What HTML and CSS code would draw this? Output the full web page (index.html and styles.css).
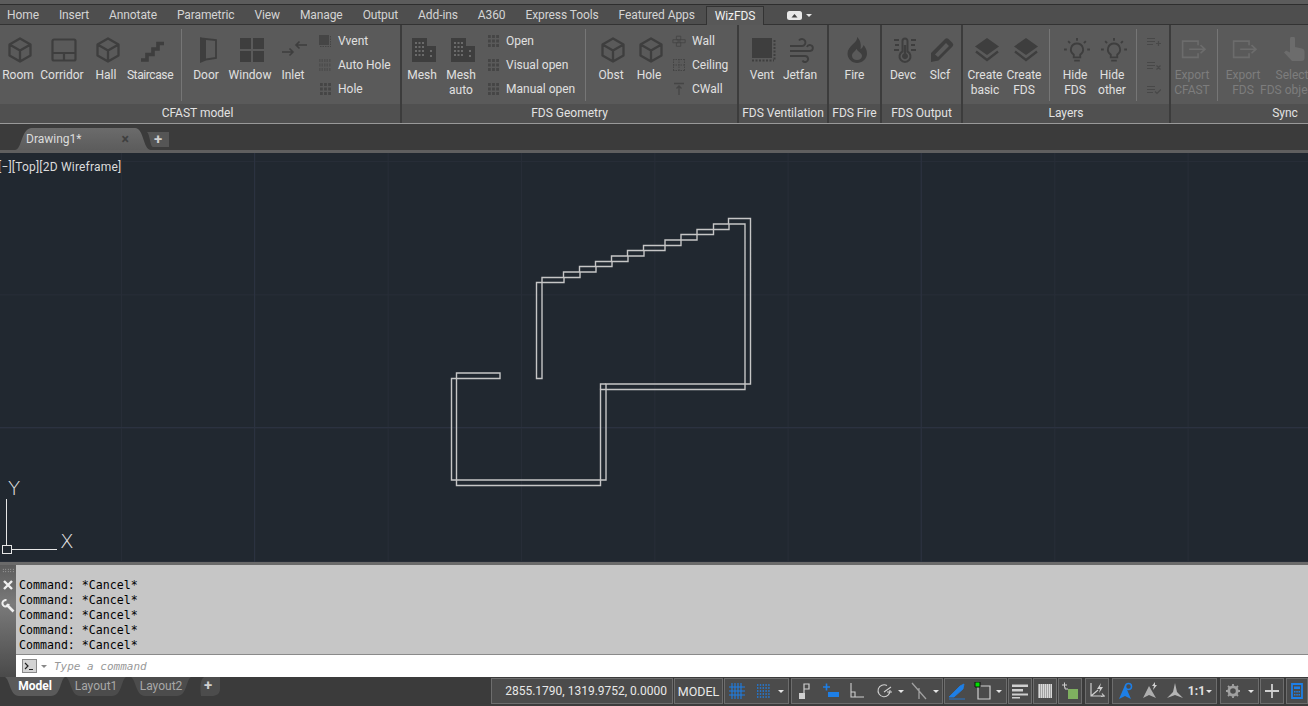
FILE: index.html
```html
<!DOCTYPE html>
<html lang="en">
<head>
<meta charset="UTF-8">
<title>Drawing1 - WizFDS</title>
<link rel="stylesheet" href="styles.css">
</head>
<body>
<svg class="defs" width="0" height="0">
  <!-- ribbon icons, 26 box -->
  <symbol id="cube" viewBox="0 0 26 26"><path d="M13 1.5 23.5 7.5v11L13 24.5 2.5 18.5v-11zM2.5 7.5 13 13.5 23.5 7.5M13 13.5v11" fill="none" stroke="currentColor" stroke-width="2.3" stroke-linejoin="round"/></symbol>
  <symbol id="corridor" viewBox="0 0 26 26"><path d="M3 2.5h20a1.5 1.5 0 0 1 1.5 1.5v18a1.5 1.5 0 0 1-1.5 1.5H3A1.5 1.5 0 0 1 1.500 22V4A1.500 1.500 0 0 1 3 2.500zM1.500 16h23M13 16v7.500" fill="none" stroke="currentColor" stroke-width="2.200"/></symbol>
  <symbol id="stair" viewBox="0 0 26 26"><path d="M2 23h6v-5.500h6V12h5V6.500h6" fill="none" stroke="currentColor" stroke-width="3.600"/></symbol>
  <symbol id="door" viewBox="0 0 26 26"><path d="M5 0v26l6-2.500V3z" fill="currentColor"/><path d="M6 1.500 21 3v18l-10 1.500" fill="none" stroke="currentColor" stroke-width="1.800"/></symbol>
  <symbol id="window" viewBox="0 0 26 26"><path d="M1 1h11v11H1zM14 1h11v11H14zM1 14h11v11H1zM14 14h11v11H14z" fill="currentColor"/></symbol>
  <symbol id="inlet" viewBox="0 0 26 26"><path d="M0 15h11M7.500 11.500 11 15l-3.500 3.500M25 8H14M17.500 4.500 14 8l3.500 3.500" fill="none" stroke="currentColor" stroke-width="1.600"/></symbol>
  <symbol id="mesh" viewBox="0 0 26 26"><path d="M1 25V1h15v8h9v16z" fill="currentColor"/><path d="M4 6h9M4 10h9M4 14h9M4 18h9M19 14h3M19 19h3" fill="none" stroke="#6a6a6a" stroke-width="2" stroke-dasharray="2 1.500"/></symbol>
  <symbol id="vent" viewBox="0 0 26 26"><path d="M1 1h20v20H1z" fill="currentColor"/><path d="M23.500 3v21M1 23.500h22" fill="none" stroke="currentColor" stroke-width="2" stroke-dasharray="2 1.500"/></symbol>
  <symbol id="wind" viewBox="0 0 26 26"><path d="M1 9h12a3.500 3.500 0 1 0-3-5.500M1 14h20a3 3 0 1 0-3-4M1 19h15a3 3 0 1 1-2.500 4.500" fill="none" stroke="currentColor" stroke-width="1.900"/></symbol>
  <symbol id="fire" viewBox="0 0 26 26"><path fill-rule="evenodd" d="M13 0c1.500 5-9.500 9-9.500 16.500C3.500 22 8 26 13 26s10-4 10-9.500c0-4-2-6.500-3.500-8.500-.5 2-1.500 3.500-3 4C17.500 7 16 2.500 13 0zM13 23c-3 0-5-1.800-5-4.200 0-3 3-4 4.500-7 1 3 5.500 4 5.500 7.200 0 2.300-2 4-5 4z" fill="currentColor"/></symbol>
  <symbol id="thermo" viewBox="0 0 26 26"><path d="M10.500 14.500V4a2.500 2.500 0 0 1 5 0v10.500a5.500 5.500 0 1 1-5 0z" fill="none" stroke="currentColor" stroke-width="2"/><path d="M11.800 8h2.400v8.500a3 3 0 1 1-2.400 0z" fill="currentColor"/><path d="M2 3h5M3 8h4M2 13h5M19 3h5M19 8h4M19 13h5" stroke="currentColor" stroke-width="2"/></symbol>
  <symbol id="pencil" viewBox="0 0 26 26"><path d="M2 25v-9L16 2a2.500 2.500 0 0 1 3.500 0l4 4a2.500 2.500 0 0 1 0 3.500L9.500 23.500zM6 17.500l3 2.500L20 9l-3-3z" fill="currentColor" fill-rule="evenodd"/></symbol>
  <symbol id="layers" viewBox="0 0 26 26"><path d="M13 1 25 9.500 13 18 1 9.500z" fill="currentColor"/><path d="M2 14.500 13 23l11-8.500" fill="none" stroke="currentColor" stroke-width="2.300"/></symbol>
  <symbol id="bulb" viewBox="0 0 28 26"><path d="M14 6a6.500 6.500 0 0 0-3.500 12v3h7v-3A6.500 6.500 0 0 0 14 6zM11 24.500h6M14 0v3M4.500 3.500l2 2M23.500 3.500l-2 2M0 12.500h3M25 12.500h3" fill="none" stroke="currentColor" stroke-width="2"/></symbol>
  <symbol id="export" viewBox="0 0 32 26"><path d="M21 7V2H2v20h19v-5M10 12h19M24 7l5.500 5-5.500 5" fill="none" stroke="currentColor" stroke-width="2"/></symbol>
  <symbol id="hand" viewBox="0 0 26 26"><path d="M9 2a2.500 2.500 0 0 1 5 0v8l7 1.500a3 3 0 0 1 2.500 3V21a3 3 0 0 1-3 3H11L3 15.500l2-2 4 2z" fill="currentColor"/></symbol>
  <!-- small ribbon icons, 14 box -->
  <symbol id="s-vvent" viewBox="0 0 14 14"><path d="M1 1h10v10H1z" fill="currentColor"/><path d="M12.500 2v10M2 12.500h11" stroke="currentColor" stroke-dasharray="1.500 1"/></symbol>
  <symbol id="s-auto" viewBox="0 0 14 14"><path d="M1 2.500h12M1 7h12M1 11.500h12" stroke="currentColor" stroke-width="3" stroke-dasharray="1.500 1" opacity=".55"/></symbol>
  <symbol id="s-grid" viewBox="0 0 14 14"><path d="M2 2.500h11M2 7h11M2 11.500h11" stroke="currentColor" stroke-width="2.800" stroke-dasharray="2.800 1.300"/></symbol>
  <symbol id="s-wall" viewBox="0 0 16 14"><path d="M5 1.500h5v4H5zM1 5.500h6v3.500H1zM9 5.500h6v3.500H9zM5 9h5v4H5z" fill="none" stroke="currentColor"/></symbol>
  <symbol id="s-ceil" viewBox="0 0 14 14"><path d="M1 1.500h12M1 12.500h12M1.500 1v12M12.500 1v12M7 1v12M1 7h12" fill="none" stroke="currentColor" stroke-dasharray="1.500 1"/></symbol>
  <symbol id="s-cwall" viewBox="0 0 14 14"><path d="M2 1.500h10M7 13V4M4.500 6.500 7 4l2.500 2.500" fill="none" stroke="currentColor" stroke-width="1.300"/></symbol>
  <symbol id="m-add" viewBox="0 0 14 10"><path d="M0 1.500h8M0 4.500h8M0 7.500h6M9 6.500h5M11.500 4v5" fill="none" stroke="currentColor" stroke-width="1.200"/></symbol>
  <symbol id="m-del" viewBox="0 0 14 10"><path d="M0 1.500h8M0 4.500h8M0 7.500h6M9.500 4.500l4 4M13.500 4.500l-4 4" fill="none" stroke="currentColor" stroke-width="1.200"/></symbol>
  <symbol id="m-ok" viewBox="0 0 14 10"><path d="M0 1.500h8M0 4.500h8M0 7.500h6M8 6.500l2 2 4-4" fill="none" stroke="currentColor" stroke-width="1.200"/></symbol>
</svg>

<div class="app">
  <div class="titlebar"></div>

  <div class="tabs">
    <span class="tab">Home</span>
    <span class="tab">Insert</span>
    <span class="tab">Annotate</span>
    <span class="tab">Parametric</span>
    <span class="tab">View</span>
    <span class="tab">Manage</span>
    <span class="tab">Output</span>
    <span class="tab">Add-ins</span>
    <span class="tab">A360</span>
    <span class="tab">Express Tools</span>
    <span class="tab">Featured Apps</span>
    <span class="tab tab-active">WizFDS</span>
    <span class="tab-extra"><svg width="15" height="9" viewBox="0 0 15 9"><rect width="15" height="9" rx="2.500" fill="#e8e8e8"/><path d="M4.500 6.500 7.500 3l3 3.500z" fill="#444"/></svg><i class="caret"></i></span>
  </div>

  <div class="ribbon">
    <section class="panel p-cfast">
      <div class="panel-body">
        <div class="btn"><svg><use href="#cube"/></svg><span>Room</span></div>
        <div class="btn"><svg><use href="#corridor"/></svg><span>Corridor</span></div>
        <div class="btn"><svg><use href="#cube"/></svg><span>Hall</span></div>
        <div class="btn"><svg><use href="#stair"/></svg><span class="tight">Staircase</span></div>
        <div class="sep"></div>
        <div class="btn"><svg><use href="#door"/></svg><span>Door</span></div>
        <div class="btn"><svg><use href="#window"/></svg><span>Window</span></div>
        <div class="btn"><svg><use href="#inlet"/></svg><span>Inlet</span></div>
        <div class="stack">
          <div class="item"><svg><use href="#s-vvent"/></svg>Vvent</div>
          <div class="item"><svg><use href="#s-auto"/></svg>Auto Hole</div>
          <div class="item"><svg><use href="#s-grid"/></svg>Hole</div>
        </div>
      </div>
      <div class="panel-name">CFAST model</div>
    </section>

    <section class="panel p-geom">
      <div class="panel-body">
        <div class="btn"><svg><use href="#mesh"/></svg><span>Mesh</span></div>
        <div class="btn"><svg><use href="#mesh"/></svg><span>Mesh<br>auto</span></div>
        <div class="stack">
          <div class="item"><svg><use href="#s-grid"/></svg>Open</div>
          <div class="item"><svg><use href="#s-grid"/></svg>Visual open</div>
          <div class="item"><svg><use href="#s-grid"/></svg>Manual open</div>
        </div>
        <div class="sep"></div>
        <div class="btn"><svg><use href="#cube"/></svg><span>Obst</span></div>
        <div class="btn"><svg><use href="#cube"/></svg><span>Hole</span></div>
        <div class="stack">
          <div class="item"><svg><use href="#s-wall"/></svg>Wall</div>
          <div class="item"><svg><use href="#s-ceil"/></svg>Ceiling</div>
          <div class="item"><svg><use href="#s-cwall"/></svg>CWall</div>
        </div>
      </div>
      <div class="panel-name">FDS Geometry</div>
    </section>

    <section class="panel p-vent">
      <div class="panel-body">
        <div class="btn"><svg><use href="#vent"/></svg><span>Vent</span></div>
        <div class="btn"><svg><use href="#wind"/></svg><span>Jetfan</span></div>
      </div>
      <div class="panel-name">FDS Ventilation</div>
    </section>

    <section class="panel p-fire">
      <div class="panel-body">
        <div class="btn"><svg><use href="#fire"/></svg><span>Fire</span></div>
      </div>
      <div class="panel-name">FDS Fire</div>
    </section>

    <section class="panel p-out">
      <div class="panel-body">
        <div class="btn"><svg><use href="#thermo"/></svg><span>Devc</span></div>
        <div class="btn"><svg><use href="#pencil"/></svg><span>Slcf</span></div>
      </div>
      <div class="panel-name">FDS Output</div>
    </section>

    <section class="panel p-layers">
      <div class="panel-body">
        <div class="btn"><svg><use href="#layers"/></svg><span>Create<br>basic</span></div>
        <div class="btn"><svg><use href="#layers"/></svg><span>Create<br>FDS</span></div>
        <div class="sep"></div>
        <div class="btn"><svg><use href="#bulb"/></svg><span>Hide<br>FDS</span></div>
        <div class="btn"><svg><use href="#bulb"/></svg><span>Hide<br>other</span></div>
        <div class="sep"></div>
        <div class="minis">
          <svg><use href="#m-add"/></svg>
          <svg><use href="#m-del"/></svg>
          <svg><use href="#m-ok"/></svg>
        </div>
      </div>
      <div class="panel-name">Layers</div>
    </section>

    <section class="panel p-sync">
      <div class="panel-body">
        <div class="btn off"><svg><use href="#export"/></svg><span>Export<br>CFAST</span></div>
        <div class="sep"></div>
        <div class="btn off"><svg><use href="#export"/></svg><span>Export<br>FDS</span></div>
        <div class="btn off"><svg><use href="#hand"/></svg><span>Select<br>FDS objects</span></div>
      </div>
      <div class="panel-name">Sync</div>
    </section>
  </div>

  <div class="docbar">
    <div class="doctab"><span>Drawing1*</span><b>×</b></div>
    <div class="docplus">+</div>
  </div>

  <main class="canvas">
    <div class="vp-label">[−][Top][2D Wireframe]</div>
    <svg class="drawing" viewBox="0 153 1308 409">
      <path class="wall" d="M750.5 218.500H728.500V224H713.500V229.500H697V234.500H681V240H665V245.500H643.500V250.500H627.500V256H611.500V261.500H595.500V266.500H579.500V272H563.500V277.500H542V378.500H536.500V282.500H564V277.500H580V272H596V266.500H612V261.500H628V256H644V250.500H665V245.500H681V240H697V234.500H713.500V229.500H729V224H745V389.500H600.500V485.500H456.500V373H500V378.500H451.500V480H606V384H750.500Z"/>
      <path class="wall" d="M600.500 389.500V384H606"/>
      <g class="ucs">
        <path d="M6.500 499V545M12 549.500H57"/>
        <rect x="2.500" y="545.500" width="9" height="8"/>
        <text x="8" y="495">Y</text>
        <text x="60" y="548">X</text>
      </g>
    </svg>
  </main>

  <div class="cmd">
    <div class="cmd-side">
      <i class="grip"></i>
      <svg width="12" height="12" viewBox="0 0 12 12"><path d="M2 2l8 8M10 2l-8 8" stroke="#f0f0f0" stroke-width="2.400"/></svg>
      <svg class="wrench" width="14" height="14" viewBox="0 0 14 14"><path d="M5.500 5.500l7 7" stroke="#f0f0f0" stroke-width="2.600"/><path d="M5.500 1.200A3.200 3.200 0 1 0 7.800 4.800" fill="none" stroke="#f0f0f0" stroke-width="2"/></svg>
    </div>
    <div class="cmd-main">
      <div class="history">
        <div>Command: *Cancel*</div>
        <div>Command: *Cancel*</div>
        <div>Command: *Cancel*</div>
        <div>Command: *Cancel*</div>
        <div>Command: *Cancel*</div>
      </div>
      <div class="cmd-input">
        <svg width="15" height="14" viewBox="0 0 15 14"><rect x=".5" y=".5" width="14" height="13" fill="#d4d4d4" stroke="#8a8a8a"/><path d="M3 4l3 3-3 3M7 10.500h4" fill="none" stroke="#222" stroke-width="1.200"/></svg>
        <i class="caret caret-grey"></i>
        <span>Type a command</span>
      </div>
    </div>
  </div>

  <footer class="bottom">
    <div class="layouts">
      <div class="ltab ltab-on">Model</div>
      <div class="ltab">Layout1</div>
      <div class="ltab">Layout2</div>
      <div class="lplus">+</div>
    </div>
    <div class="status">
      <div class="sbox s-coord">2855.1790, 1319.9752, 0.0000</div>
      <div class="sbox s-model">MODEL</div>
      <div class="sbox s-a">
        <svg class="si blue" viewBox="0 0 18 18"><path d="M1 5h16M1 9h16M1 13h16M4 1v16M7 1v16M10 1v16M13 1v16" stroke="currentColor" stroke-width="1.100" fill="none"/></svg>
        <svg class="si blue" viewBox="0 0 18 18"><path d="M2 3h14M2 6h14M2 9h14M2 12h14M2 15h14" stroke="currentColor" stroke-width="1.600" stroke-dasharray="1.400 1.400" fill="none"/></svg>
        <i class="caret"></i>
      </div>
      <div class="sbox s-b">
        <svg class="si" viewBox="0 0 18 18"><path d="M4 11h6v6H4z" fill="currentColor"/><path d="M9 11V2h5v5H9" fill="none" stroke="currentColor" stroke-width="1.200"/></svg>
        <svg class="si blue" viewBox="0 0 18 18"><path d="M1 5h7M4.500 1.500v7" stroke="currentColor" stroke-width="1.600"/><path d="M6 10h11v5H6z" fill="currentColor"/></svg>
        <svg class="si" viewBox="0 0 18 18"><path d="M3 1v14h13M3 10h4v5" fill="none" stroke="currentColor" stroke-width="1.100"/></svg>
        <svg class="si" viewBox="0 0 18 18"><path d="M15 8a6 6 0 1 1-3-4.500M9 10l7-5M12 10h5" fill="none" stroke="currentColor" stroke-width="1.100"/></svg>
        <i class="caret"></i>
        <svg class="si dim" viewBox="0 0 18 18"><path d="M2 1l14 16M9 6v11" fill="none" stroke="currentColor" stroke-width="1.300"/></svg>
        <i class="caret"></i>
      </div>
      <div class="sbox s-c">
        <svg class="si blue" viewBox="0 0 18 18"><path d="M1 15 12 4l4-2-1 5L6 15zM1 17h16" fill="currentColor" stroke="currentColor" stroke-width=".8"/></svg>
        <svg class="si" viewBox="0 0 18 18"><path d="M4 4h12v13H4z" fill="none" stroke="currentColor" stroke-width="1.200"/><path d="M1 0h5v5H1z" fill="#00e000" stroke="#111"/></svg>
        <i class="caret"></i>
      </div>
      <div class="sbox s-icon"><svg class="si" viewBox="0 0 18 18"><path d="M1 2.500h16v2.500H1zM1 7h11v2.500H1zM1 11.500h16v2H1zM1 15h8v1.500H1z" fill="currentColor"/></svg></div>
      <div class="sbox s-icon"><svg class="si" viewBox="0 0 18 18"><rect x="2" y="2" width="14" height="14" fill="#d8d8d8"/><path d="M2 3h14M2 5h14M2 7h14M2 9h14M2 11h14M2 13h14M2 15h14" stroke="#6a6a6a" stroke-width="1" stroke-dasharray="1 1"/></svg></div>
      <div class="sbox s-icon"><svg class="si" viewBox="0 0 18 18"><path d="M1 3h5M3.500 .5v5M4 5v2h3" fill="none" stroke="currentColor"/><path d="M7 7h10v10H7z" fill="#7fb060"/></svg></div>
      <div class="sbox s-icon gap-l"><svg class="si" viewBox="0 0 18 18"><path d="M3 1v13h14M3 14l7-6M14 11.500l2 2.500-3 .5" fill="none" stroke="currentColor" stroke-width="1.200"/><path d="M13 1 9 7h3l-1 4 4-6h-3z" fill="currentColor"/></svg></div>
      <div class="sbox s-d">
        <svg class="si blue" viewBox="0 0 18 18"><path d="M9 3 3 17l6-3 6 3z" fill="currentColor"/><circle cx="12.500" cy="4.500" r="3" fill="#4b4b4b" stroke="currentColor" stroke-width="1.500"/></svg>
        <svg class="si" viewBox="0 0 18 18"><path d="M8 4 2 16l6-3 7 3z" fill="currentColor" opacity=".75"/><path d="M14 0l-3 4h2l-1 4 4-5h-2z" fill="currentColor"/></svg>
        <svg class="si" viewBox="0 0 18 18"><path d="M9 1 7 10l-6 6 8-3 8 3-6-6z" fill="currentColor" opacity=".8"/></svg>
        <span class="ratio">1:1</span>
        <i class="caret"></i>
      </div>
      <div class="sbox s-e">
        <svg class="si dim" viewBox="0 0 18 18"><circle cx="9" cy="9" r="4.200" fill="none" stroke="currentColor" stroke-width="2.800"/><path d="M9 2v3M9 13v3M2 9h3M13 9h3M4 4l2 2M12 12l2 2M14 4l-2 2M6 12l-2 2" stroke="currentColor" stroke-width="1.800"/></svg>
        <i class="caret"></i>
      </div>
      <div class="sbox s-icon"><svg class="si" viewBox="0 0 18 18"><path d="M9 2v14M2 9h14" stroke="currentColor" stroke-width="1.800"/></svg></div>
      <div class="sbox s-last"><svg class="si blue" viewBox="0 0 18 18"><path d="M4 2h10v14H4z" fill="none" stroke="currentColor" stroke-width="1.800"/><path d="M6 4.500h6v2.500H6zM6 9h1.500v1.500H6zM8.300 9h1.500v1.500H8.300zM10.500 9H12v1.500h-1.500zM6 12h1.500v1.500H6zM8.300 12h1.500v1.500H8.300zM10.500 12H12v1.500h-1.500z" fill="currentColor"/></svg></div>
    </div>
  </footer>
</div>
</body>
</html>
```

FILE: styles.css
```css
body {
  margin: 0;
  background-color: #3b3b3b;
  color: #dcdcdc;
  font-family: Roboto, "Liberation Sans", sans-serif;
  font-size: 12px;
}
.defs {
  position: absolute;
}
.app {
  width: 1308px;
  height: 706px;
  overflow: hidden;
  display: flex;
  flex-direction: column;
}
.titlebar {
  height: 4px;
  background-color: #5c5c5c;
  border-bottom: 1px solid #2e2e2e;
}

/* ribbon tabs */
.tabs {
  height: 19px;
  display: flex;
  align-items: flex-end;
  gap: 20px;
  padding-left: 7px;
  background-color: #4e4e4e;
  border-bottom: 1px solid #333;
  line-height: 18px;
  color: #d4d4d4;
  letter-spacing: -0.1px;
}
.tab {
  white-space: nowrap;
}
.tab-active {
  height: 18px;
  margin: 0 -9px;
  padding: 0 8px;
  background-color: #585858;
  border: 1px solid #333;
  border-bottom: 0;
  color: #f0f0f0;
  position: relative;
  top: 1px;
}
.tab-extra {
  display: flex;
  align-items: center;
  gap: 4px;
  height: 18px;
  margin-left: 12px;
}
.caret {
  display: inline-block;
  width: 0;
  height: 0;
  border-left: 3px solid transparent;
  border-right: 3px solid transparent;
  border-top: 3px solid #e4e4e4;
}
.caret-grey {
  border-top-color: #888;
}

/* ribbon panels */
.ribbon {
  height: 98px;
  display: flex;
  gap: 2px;
  border-bottom: 1px solid #999;
  background-color: #3c3c3c;
  width: 1400px;
}
.panel {
  display: flex;
  flex-direction: column;
  flex: none;
  background-color: #5a5a5a;
}
.panel-body {
  height: 79px;
  display: grid;
  align-items: stretch;
}
.panel-name {
  height: 19px;
  line-height: 19px;
  text-align: center;
  background-color: #505050;
  color: #e2e2e2;
}
.p-cfast { width: 400px; }
.p-cfast .panel-body { grid-template-columns: 36px 52px 36px 52px 10px 40px 48px 38px 1fr; }
.p-cfast .panel-name { padding-right: 5px; }
.p-geom { width: 335px; }
.p-geom .panel-body { grid-template-columns: 40px 38px 100px 10px 42px 34px 1fr; }
.p-vent { width: 88px; }
.p-vent .panel-body { grid-template-columns: 36px 40px; padding-left: 5px; }
.p-fire { width: 51px; }
.p-fire .panel-body { grid-template-columns: 1fr; }
.p-out { width: 79px; }
.p-out .panel-body { grid-template-columns: 38px 36px; padding-left: 2px; }
.p-layers { width: 206px; }
.p-layers .panel-body { grid-template-columns: 40px 38px 12px 40px 34px 14px 22px; padding-left: 2px; }
.p-sync { width: 228px; }
.p-sync .panel-body { grid-template-columns: 42px 8px 44px 54px; }

.btn {
  display: flex;
  flex-direction: column;
  align-items: center;
  padding-top: 12px;
  text-align: center;
  white-space: nowrap;
  line-height: 15px;
  color: #e0e0e0;
}
.btn svg {
  width: 26px;
  height: 26px;
  margin: 0 0 5px 4px;
  color: #3e3e3e;
  flex: none;
}
.tight {
  letter-spacing: -0.4px;
}
.btn.off {
  color: #7d7d7d;
}
.btn.off svg {
  color: #6c6c6c;
}
.sep {
  width: 1px;
  height: 72px;
  margin: 4px auto 0;
  background-color: #767676;
}
.stack {
  padding: 4px 0 0 6px;
  display: flex;
  flex-direction: column;
}
.item {
  height: 24px;
  display: flex;
  align-items: center;
  white-space: nowrap;
  color: #e0e0e0;
}
.item svg {
  width: 14px;
  height: 14px;
  margin-right: 6px;
  color: #454545;
  flex: none;
}
.minis {
  display: flex;
  flex-direction: column;
  align-items: center;
  padding-top: 12px;
  gap: 14px;
}
.minis svg {
  width: 14px;
  height: 10px;
  color: #484848;
}

/* document tabs */
.docbar {
  height: 26px;
  display: flex;
  align-items: flex-end;
  padding-left: 15px;
  background-color: #3b3b3b;
  border-bottom: 3px solid #5f5f5f;
}
.doctab {
  width: 136px;
  height: 23px;
  display: flex;
  align-items: center;
  justify-content: space-between;
  padding: 0 22px 0 11px;
  box-sizing: border-box;
  background: linear-gradient(#6c6c6c, #5c5c5c);
  clip-path: path('M0 23 C7 23 6 1 17 1 H120 C129 1 128 23 136 23 Z');
}
.doctab b {
  color: #3f3f3f;
  font-size: 14px;
}
.docplus {
  width: 22px;
  height: 15px;
  margin: 0 0 3px -4px;
  text-align: center;
  line-height: 14px;
  font-size: 15px;
  font-weight: bold;
  color: #cfcfcf;
  background-color: #555;
  clip-path: path('M0 0 H22 V15 H6 C3 15 3 2 0 0 Z');
}

/* model space */
.canvas {
  height: 409px;
  position: relative;
  overflow: hidden;
  background-color: #212830;
  background-image:
    linear-gradient(90deg, #2b3240 1px, transparent 1px),
    linear-gradient(#2b3240 1px, transparent 1px),
    linear-gradient(90deg, #272d37 1px, transparent 1px),
    linear-gradient(#272d37 1px, transparent 1px);
  background-size: 666.67px 100%, 100% 666.67px, 133.33px 100%, 100% 133.33px;
  background-position: 254px 0, 0 274px, 121px 0, 0 8px;
}
.vp-label {
  position: absolute;
  left: -2px;
  top: 6px;
  color: #dcdcdc;
  line-height: 16px;
  letter-spacing: 0.2px;
}
.drawing {
  position: absolute;
  left: 0;
  top: 0;
  width: 1308px;
  height: 409px;
}
.wall {
  fill: none;
  stroke: #c6c6c6;
  stroke-width: 1.4;
}
.ucs path,
.ucs rect {
  fill: none;
  stroke: #e6e6e6;
  stroke-width: 1;
}
.ucs text {
  fill: #e6e6e6;
  font-family: "DejaVu Sans", sans-serif;
  font-size: 20px;
  font-weight: 200;
}

/* command line */
.cmd {
  height: 115px;
  display: flex;
  border-top: 3px solid #6a6a6a;
  box-sizing: border-box;
}
.cmd-side {
  width: 16px;
  flex: none;
  display: flex;
  flex-direction: column;
  align-items: center;
  gap: 6px;
  padding-top: 3px;
  background: linear-gradient(#5c5c5c, #7a7a7a 35%, #4a4a4a);
}
.wrench {
  margin-top: 2px;
}
.grip {
  width: 13px;
  height: 5px;
  background-image: radial-gradient(#bbb 40%, transparent 45%);
  background-size: 2.500px 2.500px;
}
.cmd-main {
  flex: 1;
  display: flex;
  flex-direction: column;
}
.history {
  flex: 1;
  display: flex;
  flex-direction: column;
  justify-content: flex-end;
  padding: 0 0 1px 3px;
  background-color: #c6c6c6;
  border-bottom: 1px solid #8a8a8a;
  color: #000;
  font-family: "DejaVu Sans Mono", monospace;
  font-size: 11.600px;
  line-height: 15px;
}
.cmd-input {
  height: 22px;
  flex: none;
  display: flex;
  align-items: center;
  padding-left: 6px;
  background-color: #fff;
  color: #999;
  font-family: "DejaVu Sans Mono", monospace;
  font-size: 11px;
  font-style: italic;
}
.cmd-input .caret {
  margin: 0 7px 0 4px;
}

/* layout tabs and status bar */
.bottom {
  height: 29px;
  display: flex;
  justify-content: space-between;
  background-color: #3b3b3b;
}
.layouts {
  display: flex;
  gap: 3px;
  padding-left: 5px;
}
.ltab {
  width: 60px;
  height: 19px;
  text-align: center;
  line-height: 18px;
  background-color: #4c4c4c;
  color: #a8a8a8;
  clip-path: path('M0 0 H60 C55 3 56 19 46 19 H14 C5 19 5 3 0 0 Z');
}
.ltab-on {
  margin-right: -2px;
  background-color: #5a5a5a;
  color: #fff;
  font-weight: bold;
}
.ltab-on + .ltab {
  margin-right: 2px;
}
.lplus {
  width: 24px;
  height: 19px;
  margin-left: 2px;
  text-align: center;
  line-height: 17px;
  font-size: 15px;
  font-weight: bold;
  color: #cfcfcf;
  background-color: #4c4c4c;
  clip-path: path('M0 0 H24 V12 C24 17 20 19 16 19 H5 C4 10 4 3 8 0 Z');
}
.status {
  width: 817px;
  height: 28px;
  margin-top: 1px;
  display: flex;
  gap: 1px;
  background-color: #3b3b3b;
}
.sbox {
  height: 26px;
  display: flex;
  align-items: center;
  justify-content: space-between;
  box-sizing: border-box;
  border: 1px solid #6d6d6d;
  background-color: #4b4b4b;
  color: #d8d8d8;
  flex: none;
}
.si {
  width: 18px;
  height: 18px;
  margin: 0 3px;
  color: #cfcfcf;
  flex: none;
}
.si.blue { color: #1e7fe6; }
.si.dim { color: #a0a0a0; }
.s-coord {
  width: 182px;
  justify-content: flex-end;
  padding-right: 5px;
  font-size: 12px;
  color: #e8e8e8;
}
.s-model {
  width: 49px;
  justify-content: center;
  font-size: 12.500px;
  color: #e8e8e8;
}
.s-a { width: 65px; padding-right: 4px; }
.s-b { width: 152px; margin-left: 1px; padding-right: 3px; }
.s-c { width: 63px; padding-right: 4px; }
.s-icon { width: 24px; justify-content: center; }
.gap-l { margin-left: 2px; }
.s-d { width: 105px; margin-left: 2px; padding-right: 4px; }
.s-e { width: 39px; margin-left: 2px; padding-right: 4px; }
.s-last { width: 22px; margin-left: 1px; justify-content: center; }
.ratio {
  font-weight: bold;
  color: #e0e0e0;
}
```
